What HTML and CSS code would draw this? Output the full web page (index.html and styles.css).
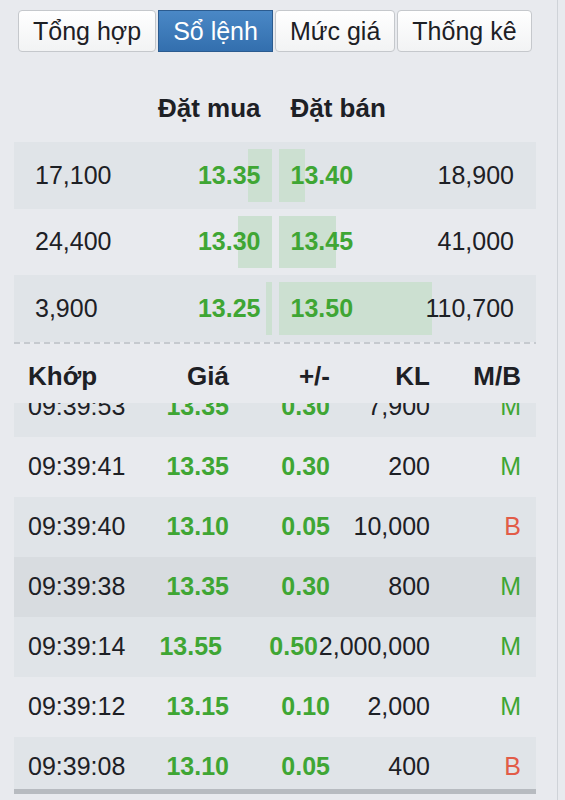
FILE: index.html
```html
<!DOCTYPE html>
<html lang="vi">

<head>
    <meta charset="UTF-8">
    <meta name="viewport" content="width=device-width, initial-scale=1.0">
    <title>Sổ lệnh</title>
    <link rel="stylesheet" href="styles.css">
</head>

<body>
    <div class="panel">
        <div class="tabs">
            <button class="tab">Tổng hợp</button>
            <button class="tab active">Sổ lệnh</button>
            <button class="tab">Mức giá</button>
            <button class="tab">Thống kê</button>
        </div>

        <div class="book-head">
            <div class="side buy"><span></span><span class="title">Đặt mua</span></div>
            <div class="side sell"><span class="title">Đặt bán</span><span></span></div>
        </div>

        <div class="book-row striped">
            <div class="side buy">
                <span class="bar" style="width: 24px"></span>
                <span class="qty">17,100</span>
                <span class="price">13.35</span>
            </div>
            <div class="side sell">
                <span class="bar" style="width: 26px"></span>
                <span class="price">13.40</span>
                <span class="qty">18,900</span>
            </div>
        </div>
        <div class="book-row">
            <div class="side buy">
                <span class="bar" style="width: 34px"></span>
                <span class="qty">24,400</span>
                <span class="price">13.30</span>
            </div>
            <div class="side sell">
                <span class="bar" style="width: 57px"></span>
                <span class="price">13.45</span>
                <span class="qty">41,000</span>
            </div>
        </div>
        <div class="book-row striped">
            <div class="side buy">
                <span class="bar" style="width: 6px"></span>
                <span class="qty">3,900</span>
                <span class="price">13.25</span>
            </div>
            <div class="side sell">
                <span class="bar" style="width: 153px"></span>
                <span class="price">13.50</span>
                <span class="qty">110,700</span>
            </div>
        </div>

        <div class="dash"></div>

        <div class="trade-head">
            <span class="col-time">Khớp</span>
            <span>Giá</span>
            <span>+/-</span>
            <span>KL</span>
            <span>M/B</span>
        </div>

        <div class="trades">
            <div class="trade-list">
                <div class="trade striped">
                    <span class="col-time">09:39:53</span>
                    <span class="up">13.35</span>
                    <span class="up">0.30</span>
                    <span>7,900</span>
                    <span class="mua">M</span>
                </div>
                <div class="trade">
                    <span class="col-time">09:39:41</span>
                    <span class="up">13.35</span>
                    <span class="up">0.30</span>
                    <span>200</span>
                    <span class="mua">M</span>
                </div>
                <div class="trade striped">
                    <span class="col-time">09:39:40</span>
                    <span class="up">13.10</span>
                    <span class="up">0.05</span>
                    <span>10,000</span>
                    <span class="ban">B</span>
                </div>
                <div class="trade hover">
                    <span class="col-time">09:39:38</span>
                    <span class="up">13.35</span>
                    <span class="up">0.30</span>
                    <span>800</span>
                    <span class="mua">M</span>
                </div>
                <div class="trade striped wide">
                    <span class="col-time">09:39:14</span>
                    <span class="up">13.55</span>
                    <span class="up">0.50</span>
                    <span>2,000,000</span>
                    <span class="mua">M</span>
                </div>
                <div class="trade">
                    <span class="col-time">09:39:12</span>
                    <span class="up">13.15</span>
                    <span class="up">0.10</span>
                    <span>2,000</span>
                    <span class="mua">M</span>
                </div>
                <div class="trade striped">
                    <span class="col-time">09:39:08</span>
                    <span class="up">13.10</span>
                    <span class="up">0.05</span>
                    <span>400</span>
                    <span class="ban">B</span>
                </div>
            </div>
        </div>
    </div>
</body>

</html>
```

FILE: styles.css
```css
* {
    margin: 0;
    padding: 0;
    box-sizing: border-box;
}

body {
    background-color: #e8eaee;
    font-family: "Liberation Sans", Arial, sans-serif;
    color: #1d2025;
}

.panel {
    width: 558px;
    height: 800px;
    padding: 10px 21px 0 14px;
    border-right: 1px solid #cfd3d8;
}

/* tabs */
.tabs {
    display: flex;
    gap: 2px;
    padding-left: 4px;
}

.tab {
    height: 42px;
    padding: 0 14px;
    font-family: inherit;
    font-size: 25px;
    color: #1d2025;
    background: linear-gradient(#ffffff, #f2f3f4);
    border: 1px solid #c5c8cc;
    border-radius: 4px;
}

.tab.active {
    color: #ffffff;
    background: linear-gradient(#4a88c6, #336fae);
    border-color: #2b5b8f;
    border-radius: 0;
}

/* order book */
.book-head,
.book-row {
    display: grid;
    grid-template-columns: 1fr 1fr;
    column-gap: 7px;
}

.book-head {
    height: 90px;
    padding-top: 41px;
    align-items: start;
}

.book-row {
    height: 66.67px;
    font-size: 25px;
}

.striped {
    background-color: #e0e4e8;
}

.side {
    position: relative;
    display: flex;
    justify-content: space-between;
    align-items: center;
}

.side.buy {
    padding: 0 11px 0 21px;
}

.side.sell {
    padding: 0 22px 0 12px;
}

.title {
    font-size: 26px;
    font-weight: bold;
}

.bar {
    position: absolute;
    top: 7px;
    bottom: 7px;
    background-color: #cce0d1;
}

.buy .bar {
    right: 0;
}

.sell .bar {
    left: 0;
}

.qty,
.price {
    position: relative;
}

.price {
    font-weight: bold;
    color: #3fa634;
}

.dash {
    height: 2px;
    background: repeating-linear-gradient(to right, #c6cacf 0 6px, transparent 6px 10px);
}

/* trades */
.trade-head,
.trade {
    display: grid;
    grid-template-columns: 111px 90px 101px 100px 91px;
    align-items: center;
    padding: 0 15px 0 14px;
    text-align: right;
}

.trade-head {
    height: 59px;
    padding-top: 6px;
    font-size: 26px;
    font-weight: bold;
}

.col-time {
    text-align: left;
}

.trades {
    height: 391px;
    overflow: hidden;
    border-bottom: 5px solid #b7bbc0;
}

.trade-list {
    margin-top: -26px;
}

.trade {
    height: 60px;
    font-size: 25px;
}

.trade.wide {
    grid-template-columns: 104px 90px 96px 112px 91px;
}

.trade.hover {
    background-color: #d8dce0;
}

.up {
    font-weight: bold;
    color: #3fa634;
}

.mua {
    color: #3fa634;
}

.ban {
    color: #e25c48;
}
```
